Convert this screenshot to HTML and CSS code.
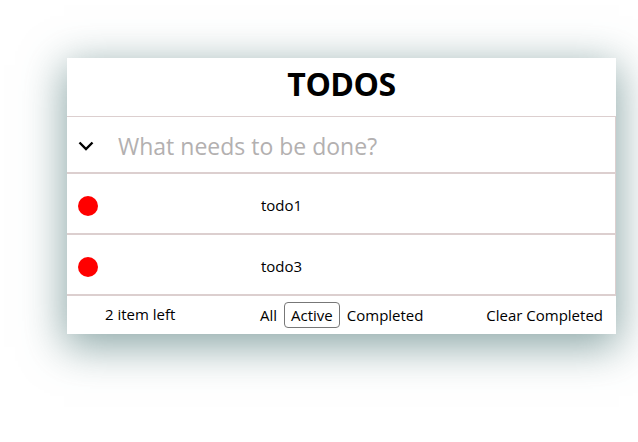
FILE: index.html
```html
<!DOCTYPE html>
<html>
<head>
<meta charset="utf-8">
<link rel="stylesheet" href="styles.css">
</head>
<body>
<section class="todoapp">
  <header class="header">
    <h1 class="title">TODOS</h1>
  </header>
  <div class="new-row">
    <svg class="toggle-all" width="16" height="10" viewBox="0 0 16 10"><polyline points="1.5,1.5 8,8 14.5,1.5" fill="none" stroke="#000" stroke-width="2.4"/></svg>
    <input class="new-todo" placeholder="What needs to be done?">
  </div>
  <ul class="todo-list">
    <li class="todo"><span class="dot"></span><span class="label">todo1</span></li>
    <li class="todo"><span class="dot"></span><span class="label">todo3</span></li>
  </ul>
  <footer class="footer">
    <span class="count">2 item left</span>
    <div class="filters">
      <span class="filter">All</span>
      <span class="filter selected">Active</span>
      <span class="filter">Completed</span>
    </div>
    <span class="clear">Clear Completed</span>
  </footer>
</section>
</body>
</html>
```
FILE: styles.css
```css
html, body {
  margin: 0;
  background: #fff;
}
html {
  height: 100%;
}
body {
  min-height: 100%;
  box-sizing: border-box;
  padding: 58px 0 0 67px;
  font-family: "Open Sans", "Noto Sans", sans-serif;
  color: #000;
}
.todoapp {
  width: 549px;
  background: #fff;
  box-shadow: 0 10px 40px 3px rgba(65, 110, 110, 0.6);
}
.header {
  height: 58px;
  box-sizing: border-box;
  padding-bottom: 6px;
  display: flex;
  align-items: center;
  justify-content: center;
}
.title {
  margin: 0;
  font-size: 32px;
  font-weight: 700;
  color: #000;
  line-height: 1;
  letter-spacing: -0.5px;
}
.new-row {
  height: 55px;
  display: flex;
  align-items: center;
  border-top: 1px solid #dccfcf;
  border-right: 1px solid #dccfcf;
  border-bottom: 2px solid #dccfcf;
}
.toggle-all {
  margin-left: 11px;
  margin-top: 2px;
  flex: none;
}
.new-todo {
  margin-left: 24px;
  margin-top: 2px;
  border: none;
  outline: none;
  padding: 0;
  font-family: inherit;
  font-size: 23px;
  width: 400px;
  color: #333;
  background: transparent;
}
.new-todo::placeholder {
  color: #b3b0b0;
}
.todo-list {
  list-style: none;
  margin: 0;
  padding: 0;
}
.todo {
  height: 59px;
  display: flex;
  align-items: center;
  border-right: 1px solid #dccfcf;
  border-bottom: 2px solid #dccfcf;
  font-size: 15px;
}
.dot {
  width: 20px;
  height: 20px;
  border-radius: 50%;
  background: #ff0000;
  margin-left: 11px;
  margin-top: 4px;
  flex: none;
}
.label {
  margin-left: 163px;
  margin-top: 2px;
}
.footer {
  height: 38px;
  display: flex;
  align-items: center;
  font-size: 15px;
}
.count {
  margin-left: 38px;
  width: 154px;
  margin-top: -3px;
}
.filters {
  display: flex;
  align-items: center;
}
.filter {
  padding: 2px 6px;
  border: 1px solid transparent;
  border-radius: 4px;
}
.filter:first-child {
  padding-left: 0;
}
.selected {
  border-color: #777;
}
.clear {
  margin-left: auto;
  margin-right: 13px;
}
```
